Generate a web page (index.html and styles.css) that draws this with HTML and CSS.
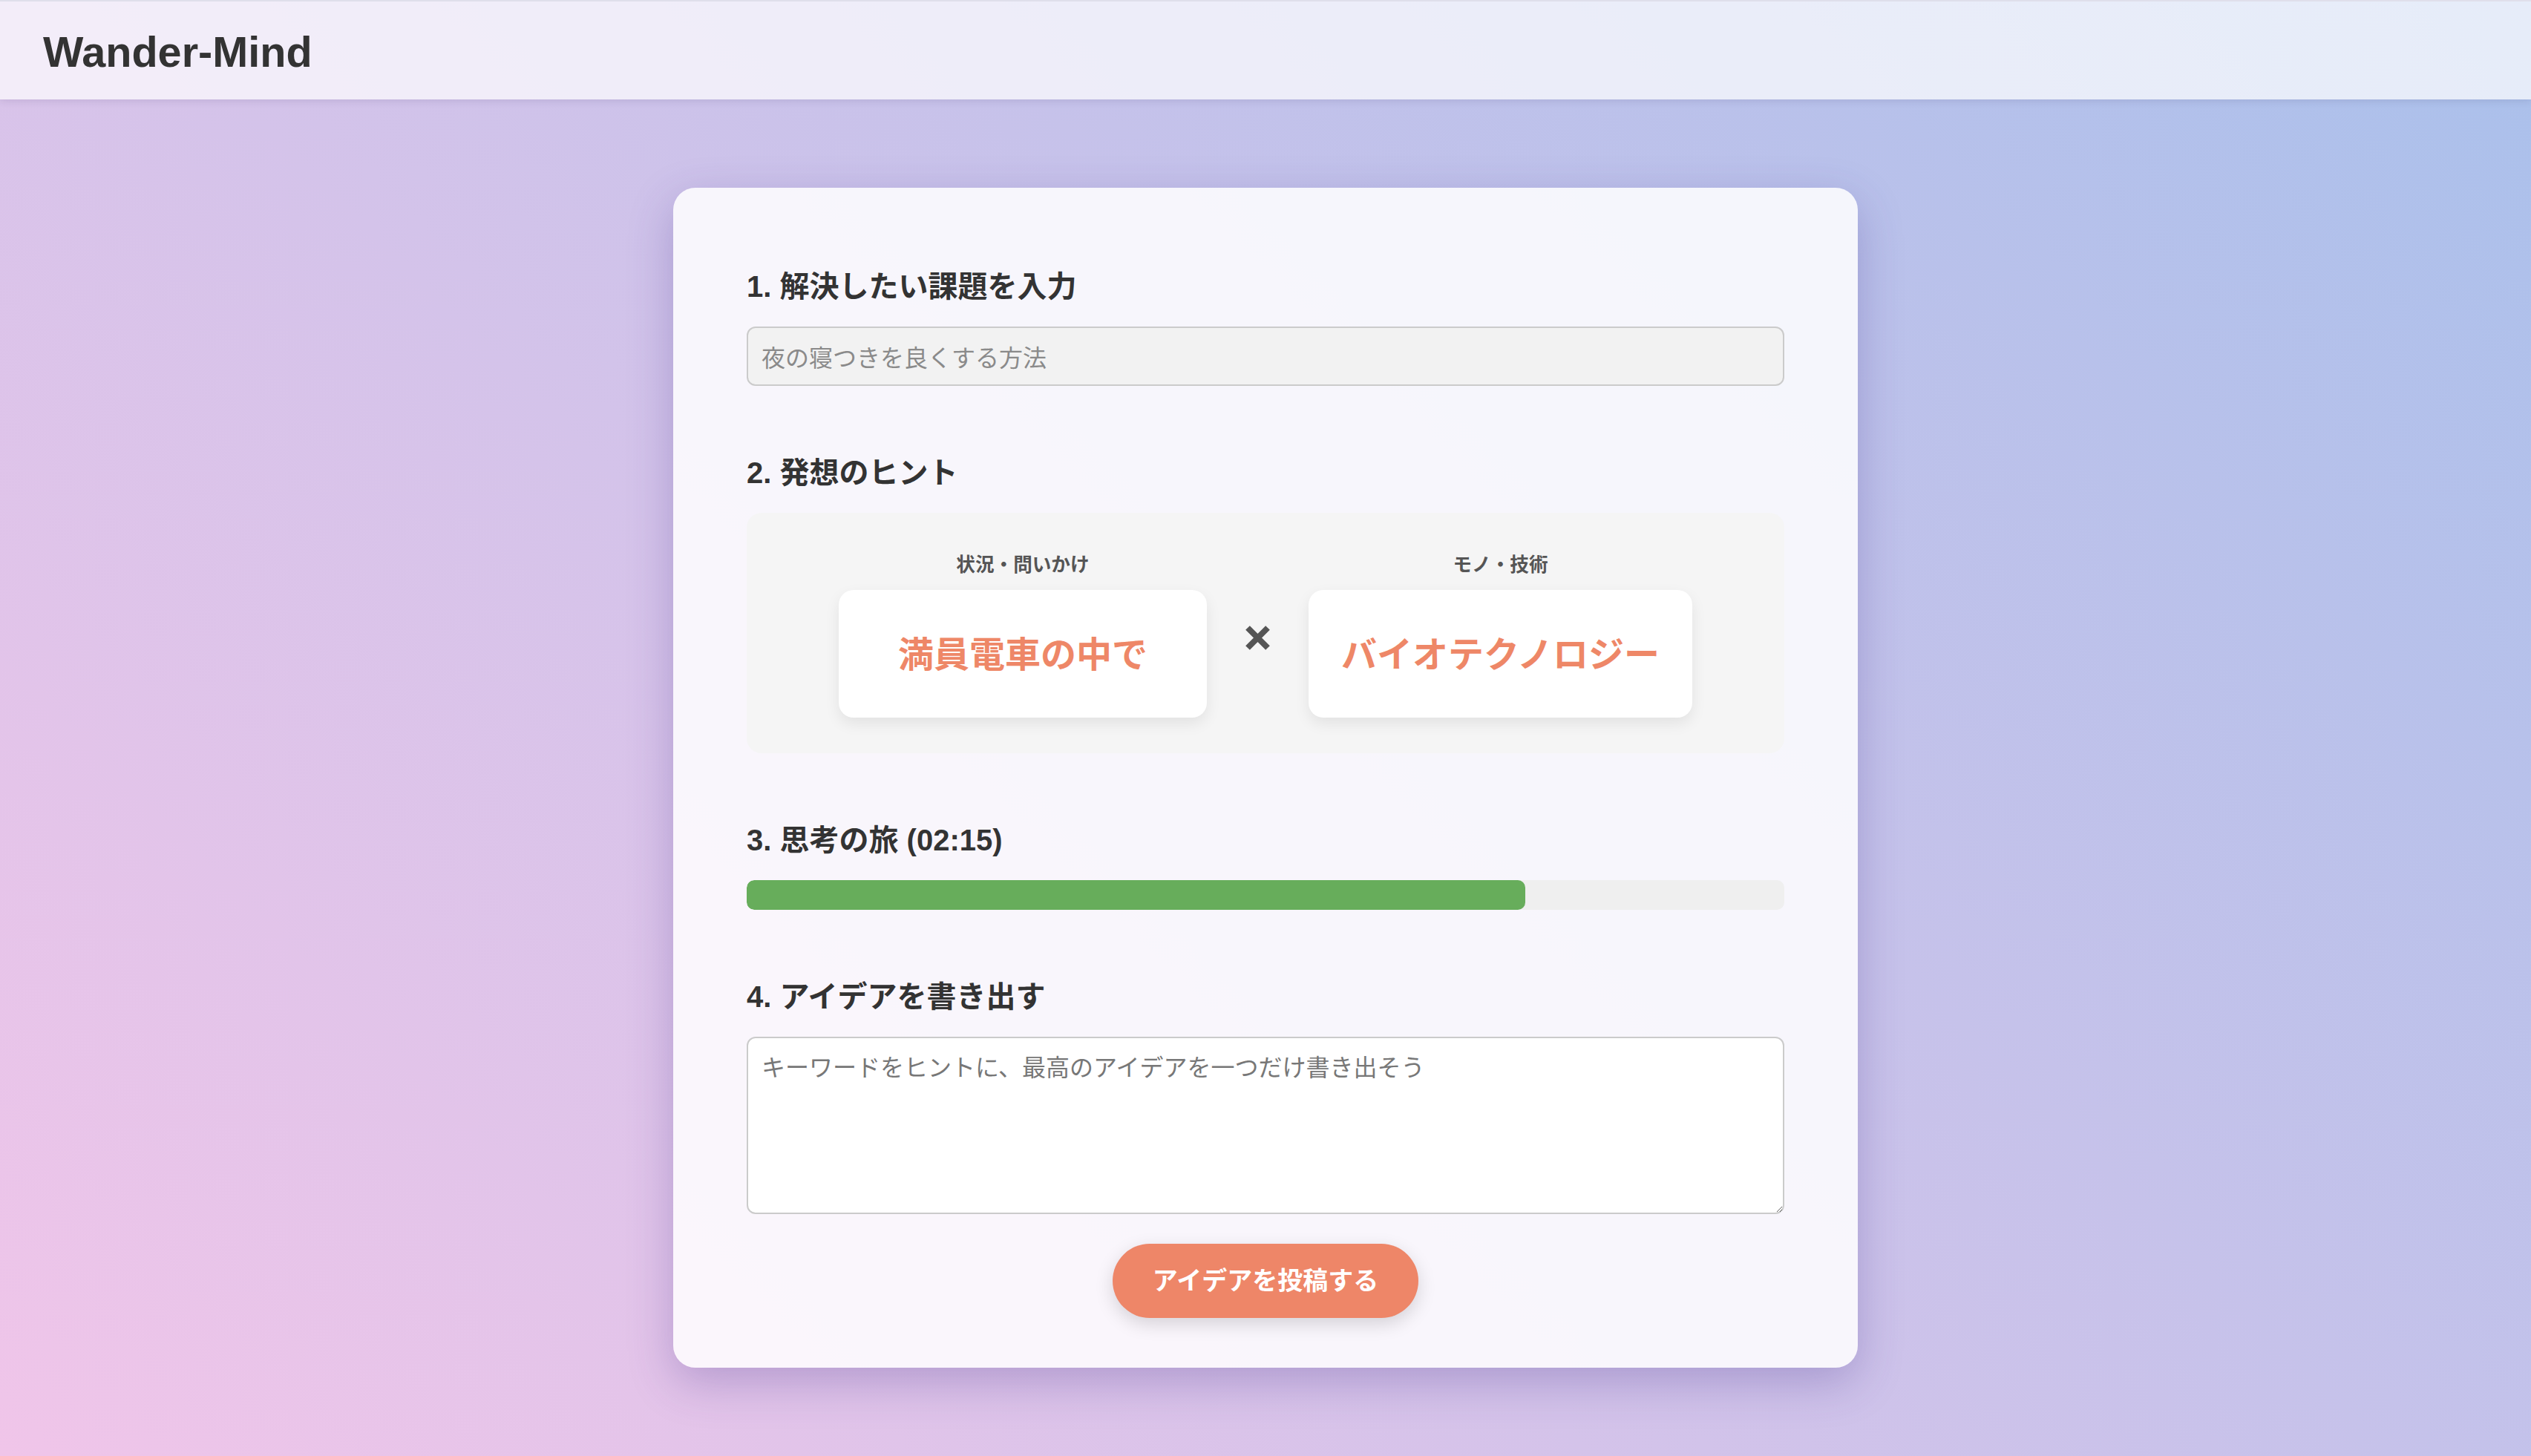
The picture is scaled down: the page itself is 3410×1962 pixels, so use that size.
FILE: index.html
```html
<!DOCTYPE html>
<html lang="ja">
<head>
<meta charset="utf-8">
<title>Wander-Mind</title>
<link rel="stylesheet" href="styles.css">
</head>
<body>
<header class="site-header">
  <h1 class="logo">Wander-Mind</h1>
</header>
<main class="page">
  <div class="panel">
    <section class="step">
      <h2 class="step-title">1. 解決したい課題を入力</h2>
      <input class="problem-input" type="text" value="夜の寝つきを良くする方法" readonly>
    </section>
    <section class="step">
      <h2 class="step-title">2. 発想のヒント</h2>
      <div class="hints">
        <div class="hint-col hint-col-a">
          <div class="hint-label">状況・問いかけ</div>
          <div class="hint-card">満員電車の中で</div>
        </div>
        <div class="times">
          <svg width="33" height="33" viewBox="0 0 33 33"><path d="M3 3 L30 30 M30 3 L3 30" stroke="#555" stroke-width="8" fill="none"/></svg>
        </div>
        <div class="hint-col">
          <div class="hint-label">モノ・技術</div>
          <div class="hint-card">バイオテクノロジー</div>
        </div>
      </div>
    </section>
    <section class="step">
      <h2 class="step-title">3. 思考の旅 (02:15)</h2>
      <div class="progress"><div class="progress-fill" style="width: 75%"></div></div>
    </section>
    <section class="step step-last">
      <h2 class="step-title">4. アイデアを書き出す</h2>
      <textarea class="idea-input" placeholder="キーワードをヒントに、最高のアイデアを一つだけ書き出そう"></textarea>
    </section>
    <div class="actions">
      <button class="submit-btn" type="button">アイデアを投稿する</button>
    </div>
  </div>
</main>
</body>
</html>
```

FILE: styles.css
```css
html, body {
  margin: 0;
  padding: 0;
}

body {
  min-height: 100vh;
  background: linear-gradient(45deg, #f0c5e9 0%, #aac0eb 100%);
  font-family: "Liberation Sans", "Noto Sans CJK JP", sans-serif;
  color: #333;
}

.site-header {
  box-sizing: border-box;
  height: 134px;
  border-top: 2px solid #dfdfeb;
  padding: 4px 58px 0;
  background: rgba(255, 255, 255, 0.7);
  box-shadow: 0 2px 10px rgba(40, 30, 80, 0.12);
  position: relative;
}

.logo {
  margin: 0;
  font-size: 57.6px;
  line-height: 128px;
  font-weight: 700;
  color: #333;
}

.page {
  display: flex;
  justify-content: center;
  padding-top: 119px;
  padding-bottom: 60px;
}

.panel {
  box-sizing: border-box;
  width: 1596px;
  padding: 109px 99px 67px;
  background: rgba(255, 255, 255, 0.85);
  border-radius: 30px;
  box-shadow: 0 20px 60px rgba(70, 50, 140, 0.28);
}

.step {
  margin: 0 0 93px;
}

.step-last {
  margin-bottom: 40px;
}

.step-title {
  margin: 0 0 30px;
  font-size: 40px;
  line-height: 48px;
  font-weight: 700;
  color: #333;
}

.problem-input {
  display: block;
  box-sizing: border-box;
  width: 100%;
  height: 80px;
  padding: 0 18px;
  border: 2px solid #cbcbcb;
  border-radius: 12px;
  background: #f2f2f2;
  color: #8a8a8a;
  font-family: "Noto Sans CJK JP", sans-serif;
  font-size: 32px;
  outline: none;
}

.hints {
  display: flex;
  justify-content: center;
  align-items: center;
  gap: 52px;
  padding: 48px;
  background: #f5f5f5;
  border-radius: 20px;
}

.hint-col {
  display: flex;
  flex-direction: column;
  align-items: center;
}

.hint-label {
  font-family: "Noto Sans CJK JP", sans-serif;
  font-size: 25.6px;
  line-height: 40px;
  font-weight: 700;
  color: #555;
  margin-bottom: 16px;
}

.hint-card {
  box-sizing: border-box;
  min-width: 496px;
  padding: 47px 44px 53px;
  background: #fff;
  border-radius: 20px;
  box-shadow: 0 8px 20px rgba(0, 0, 0, 0.08);
  font-family: "Noto Sans CJK JP", sans-serif;
  font-size: 48px;
  line-height: 72px;
  font-weight: 700;
  color: #ee8767;
  text-align: center;
  white-space: nowrap;
}

.times {
  display: flex;
  margin-top: 12px;
}

.times svg {
  display: block;
}

.progress {
  height: 40px;
  background: #efefef;
  border-radius: 10px;
  overflow: hidden;
}

.progress-fill {
  height: 100%;
  background: #67ad5b;
  border-radius: 10px;
}

.idea-input {
  display: block;
  box-sizing: border-box;
  width: 100%;
  height: 239px;
  padding: 18px 18px;
  border: 2px solid #cbcbcb;
  border-radius: 12px;
  background: #fff;
  font-family: "Noto Sans CJK JP", sans-serif;
  font-size: 32px;
  line-height: 1.2;
  color: #333;
  outline: none;
}

.idea-input::placeholder {
  color: #777;
}

.actions {
  display: flex;
  justify-content: center;
}

.submit-btn {
  box-sizing: border-box;
  height: 100px;
  padding: 0 54px;
  border: none;
  border-radius: 50px;
  background: #ee8668;
  color: #fff;
  font-family: "Noto Sans CJK JP", sans-serif;
  font-size: 34px;
  line-height: 48px;
  padding-bottom: 4px;
  font-weight: 700;
  box-shadow: 0 8px 24px rgba(0, 0, 0, 0.15);
  cursor: pointer;
}
```
